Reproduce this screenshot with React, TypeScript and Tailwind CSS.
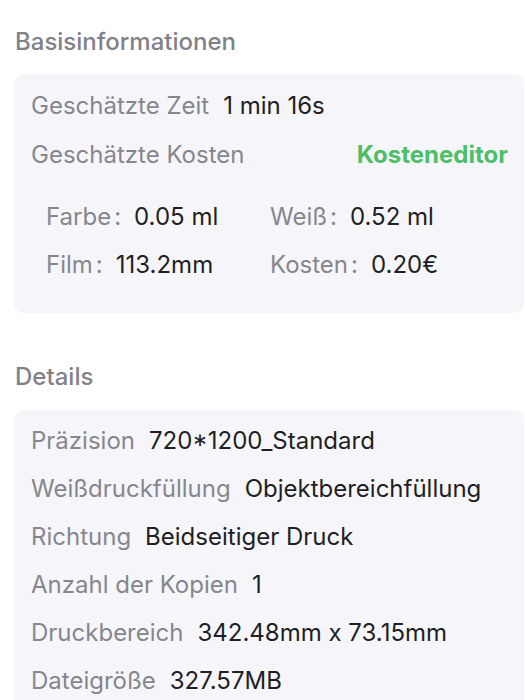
const basis = [
  { label: "Farbe", value: "0.05 ml" },
  { label: "Weiß", value: "0.52 ml" },
  { label: "Film", value: "113.2mm" },
  { label: "Kosten", value: "0.20€" },
];

const details = [
  { label: "Präzision", value: "720*1200_Standard" },
  { label: "Weißdruckfüllung", value: "Objektbereichfüllung" },
  { label: "Richtung", value: "Beidseitiger Druck" },
  { label: "Anzahl der Kopien", value: "1" },
  { label: "Druckbereich", value: "342.48mm x 73.15mm" },
  { label: "Dateigröße", value: "327.57MB" },
];

const Row = ({ label, value }: { label: string; value: string }) => (
  <div className="flex h-[48px] items-center gap-[14px]">
    <span className="text-[#86868e]">{label}</span>
    <span className="text-[#1f1f24]">{value}</span>
  </div>
);

export default function App() {
  return (
    <div className="min-h-[700px] bg-white pl-[14px] pr-[1px] font-['Inter',sans-serif] text-[24px] leading-none">
      {/* Basisinformationen */}
      <h2 className="pt-[30px] pl-[1px] text-[24px] font-medium text-[#818189]">Basisinformationen</h2>
      <div className="mt-[20px] rounded-[10px] bg-[#f6f6fa] pl-[17px] pr-[16px] pt-[7px] pb-[24px]">
        <div className="flex h-[49px] items-center gap-[14px]">
          <span className="text-[#86868e]">Geschätzte Zeit</span>
          <span className="text-[#1f1f24]">1 min 16s</span>
        </div>
        <div className="flex h-[49px] items-center justify-between">
          <span className="text-[#86868e]">Geschätzte Kosten</span>
          <button className="font-bold text-[#4cbf68]">Kosteneditor</button>
        </div>
        <div className="mt-[14px] grid grid-cols-[224px_1fr] pl-[15px]">
          {basis.map((b) => (
            <div key={b.label} className="flex h-[48px] items-center">
              <span className="text-[#86868e]">{b.label}</span>
              <span className="ml-[3px] mr-[13px] text-[#86868e]">:</span>
              <span className="text-[#1f1f24]">{b.value}</span>
            </div>
          ))}
        </div>
      </div>

      {/* Details */}
      <h2 className="mt-[52px] pl-[1px] text-[24px] font-medium text-[#818189]">Details</h2>
      <div className="mt-[21px] rounded-[10px] bg-[#f6f6fa] pl-[17px] pr-[16px] pt-[7px] pb-[24px]">
        {details.map((d) => (
          <Row key={d.label} label={d.label} value={d.value} />
        ))}
      </div>
    </div>
  );
}
